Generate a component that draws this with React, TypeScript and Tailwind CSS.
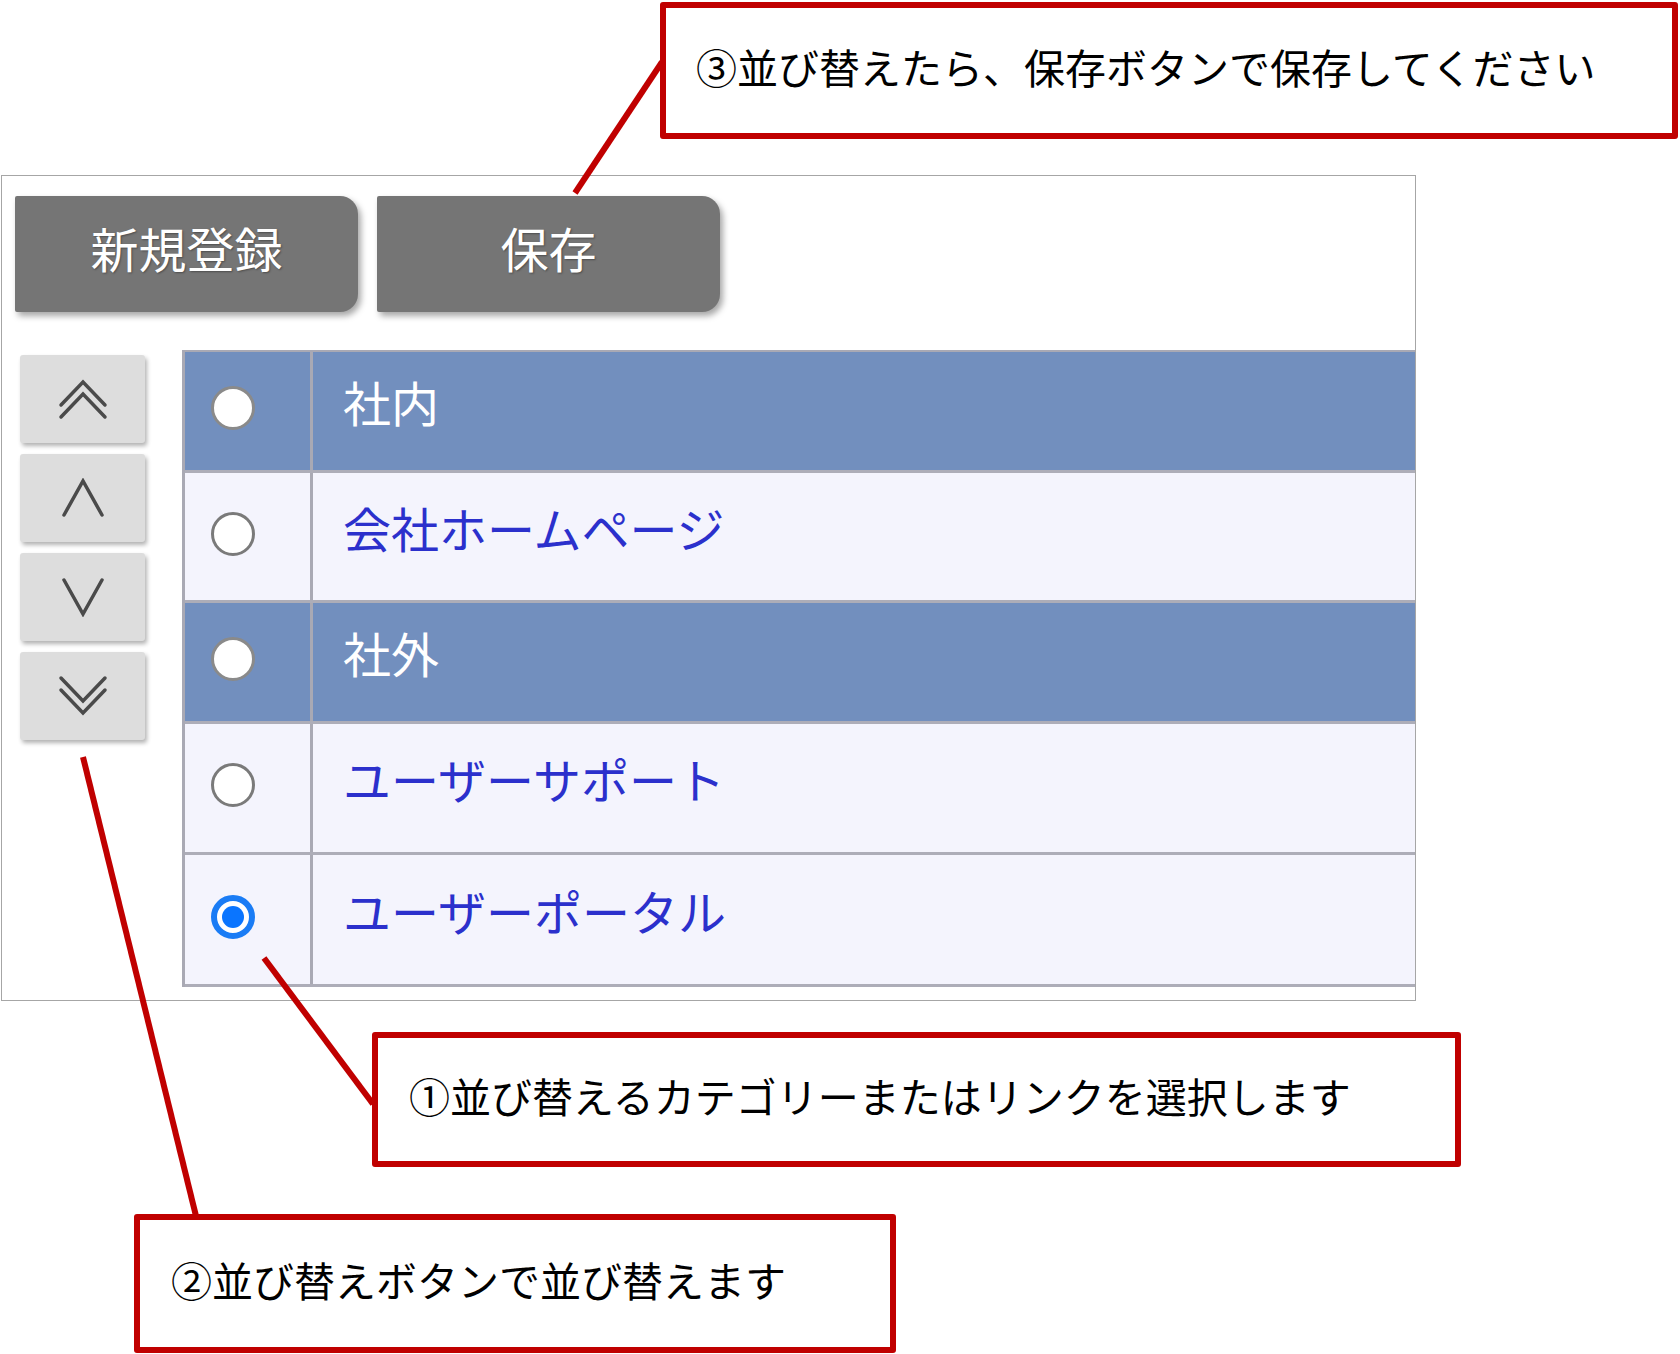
import React from "react"

type Row = { label: string; kind: "category" | "link"; h: string; selected?: boolean }

const rows: Row[] = [
  { label: "社内", kind: "category", h: "h-[121px]" },
  { label: "会社ホームページ", kind: "link", h: "h-[130px]" },
  { label: "社外", kind: "category", h: "h-[121px]" },
  { label: "ユーザーサポート", kind: "link", h: "h-[131px]" },
  { label: "ユーザーポータル", kind: "link", h: "h-[132px]", selected: true },
]

function Radio({ selected, onBlue }: { selected?: boolean; onBlue?: boolean }) {
  if (selected) {
    return (
      <div className="flex h-[44px] w-[44px] items-center justify-center rounded-full border-[6px] border-[#1a7cf5] bg-white">
        <div className="h-[22px] w-[22px] rounded-full bg-[#0a75ff]" />
      </div>
    )
  }
  return (
    <div
      className={
        onBlue
          ? "h-[44px] w-[44px] rounded-full border-[3px] border-[#8a8a8a] bg-white"
          : "h-[44px] w-[44px] rounded-full border-[3px] border-[#7a7a7a] bg-white"
      }
    />
  )
}

function ArrowIcon({ dir }: { dir: "top" | "up" | "down" | "bottom" }) {
  const stroke = { stroke: "#4a4a4a", strokeWidth: 3.5, fill: "none", strokeLinecap: "round" as const }
  if (dir === "top")
    return (
      <svg width="50" height="42" viewBox="0 0 50 42">
        <polyline points="3,27 25,4 47,27" {...stroke} />
        <polyline points="3,39 25,16 47,39" {...stroke} />
      </svg>
    )
  if (dir === "bottom")
    return (
      <svg width="50" height="42" viewBox="0 0 50 42">
        <polyline points="3,3 25,26 47,3" {...stroke} />
        <polyline points="3,15 25,38 47,15" {...stroke} />
      </svg>
    )
  if (dir === "up")
    return (
      <svg width="44" height="40" viewBox="0 0 44 40">
        <polyline points="3,37 22,3 41,37" {...stroke} />
      </svg>
    )
  return (
    <svg width="44" height="40" viewBox="0 0 44 40">
      <polyline points="3,3 22,37 41,3" {...stroke} />
    </svg>
  )
}

function Callout({ className, text }: { className: string; text: string }) {
  return (
    <div
      className={`absolute flex items-center rounded-[3px] border-[6px] border-[#c00000] bg-white pb-[9px] text-[41px] leading-none text-black ${className}`}
    >
      {text}
    </div>
  )
}

export default function App() {
  return (
    <div className="relative h-[1354px] w-[1680px] overflow-hidden bg-white font-['Noto_Sans_CJK_JP',sans-serif]">
      {/* panel */}
      <div className="ml-[1px] mt-[175px] h-[826px] w-[1415px] border border-[#a6a6a6] bg-white pl-[13px] pt-[20px]">
        <div className="flex gap-[19px]">
          {["新規登録", "保存"].map((t) => (
            <button
              key={t}
              className="flex h-[116px] w-[343px] items-center justify-center rounded-l-[2px] rounded-r-[18px] bg-[#757575] pb-[14px] text-[48px] leading-none text-white shadow-[3px_4px_6px_rgba(0,0,0,0.35)] [text-shadow:1px_1px_2px_rgba(0,0,0,0.35)]"
            >
              {t}
            </button>
          ))}
        </div>

        <div className="mt-[38px] flex items-start">
          <div className="ml-[5px] flex w-[125px] flex-col gap-[11px] pt-[5px]">
            {(["top", "up", "down", "bottom"] as const).map((d) => (
              <div
                key={d}
                className="flex h-[88px] items-center justify-center rounded-[3px] bg-[#dddddd] shadow-[2px_3px_4px_rgba(0,0,0,0.3)]"
              >
                <ArrowIcon dir={d} />
              </div>
            ))}
          </div>

          <div className="ml-[37px] flex-1 border-l-[3px] border-t-2 border-[#a9a9b4]">
            {rows.map((r) => (
              <div
                key={r.label}
                className={`flex border-b-[3px] border-[#adadb8] ${r.h} ${
                  r.kind === "category" ? "bg-[#728fbe]" : "bg-[#f4f4fd]"
                }`}
              >
                <div className="flex w-[128px] items-center border-r-[3px] border-[#a9a9b4] pb-[6px] pl-[26px]">
                  <Radio selected={r.selected} onBlue={r.kind === "category"} />
                </div>
                <div
                  className={`flex items-center pb-[20px] pl-[30px] text-[48px] leading-none ${
                    r.kind === "category" ? "text-white" : "text-[#2b30cc]"
                  }`}
                >
                  {r.label}
                </div>
              </div>
            ))}
          </div>
        </div>
      </div>

      {/* leader lines */}
      <svg className="pointer-events-none absolute left-0 top-0" width="1680" height="1354">
        <line x1="575" y1="193" x2="662" y2="62" stroke="#c00000" strokeWidth="6" />
        <line x1="264" y1="958" x2="373" y2="1104" stroke="#c00000" strokeWidth="6" />
        <line x1="83" y1="757" x2="196" y2="1216" stroke="#c00000" strokeWidth="6" />
      </svg>

      <Callout className="left-[660px] top-[2px] h-[137px] w-[1018px] pl-[30px]" text="③並び替えたら、保存ボタンで保存してください" />
      <Callout className="left-[372px] top-[1032px] h-[135px] w-[1089px] pl-[31px]" text="①並び替えるカテゴリーまたはリンクを選択します" />
      <Callout className="left-[134px] top-[1214px] h-[139px] w-[762px] pl-[31px]" text="②並び替えボタンで並び替えます" />
    </div>
  )
}
